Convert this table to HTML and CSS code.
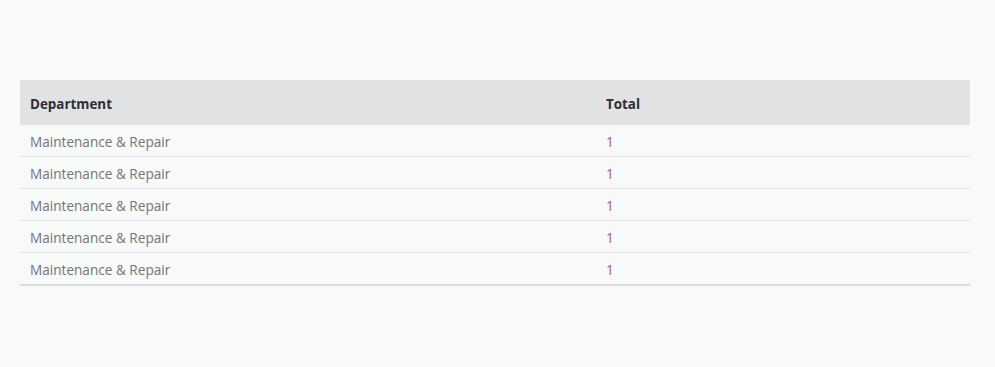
FILE: index.html
```html
<!DOCTYPE html>
<html>
<head>
<meta charset="utf-8">
<link rel="stylesheet" href="styles.css">
</head>
<body>
<div class="wrap">
  <table class="grid">
    <thead>
      <tr><th class="c1">Department</th><th>Total</th></tr>
    </thead>
    <tbody>
      <tr><td class="name">Maintenance &amp; Repair</td><td class="num">1</td></tr>
      <tr><td class="name">Maintenance &amp; Repair</td><td class="num">1</td></tr>
      <tr><td class="name">Maintenance &amp; Repair</td><td class="num">1</td></tr>
      <tr><td class="name">Maintenance &amp; Repair</td><td class="num">1</td></tr>
      <tr class="last"><td class="name">Maintenance &amp; Repair</td><td class="num">1</td></tr>
    </tbody>
  </table>
</div>
</body>
</html>
```
FILE: styles.css
```css
html, body {
  margin: 0;
  padding: 0;
  background: #f8f9f9;
  font-family: "Open Sans", sans-serif;
}
.wrap {
  padding: 80px 25px 0 20px;
}
.grid {
  width: 950px;
  border-collapse: collapse;
  font-size: 13.6px;
}
.grid th {
  background: #e1e2e4;
  height: 43px;
  padding: 2px 10px 0;
  text-align: left;
  font-weight: 700;
  font-size: 13.4px;
  color: #2c2f33;
}
.grid th.c1 {
  width: 556px;
}
.grid td {
  height: 30px;
  padding: 1px 10px 0;
  border-bottom: 1px solid #e0e1e2;
}
.grid tr.last td {
  border-bottom: 2px solid #dcdddf;
}
.name {
  color: #737478;
}
.num {
  color: #a0559a;
}
```
